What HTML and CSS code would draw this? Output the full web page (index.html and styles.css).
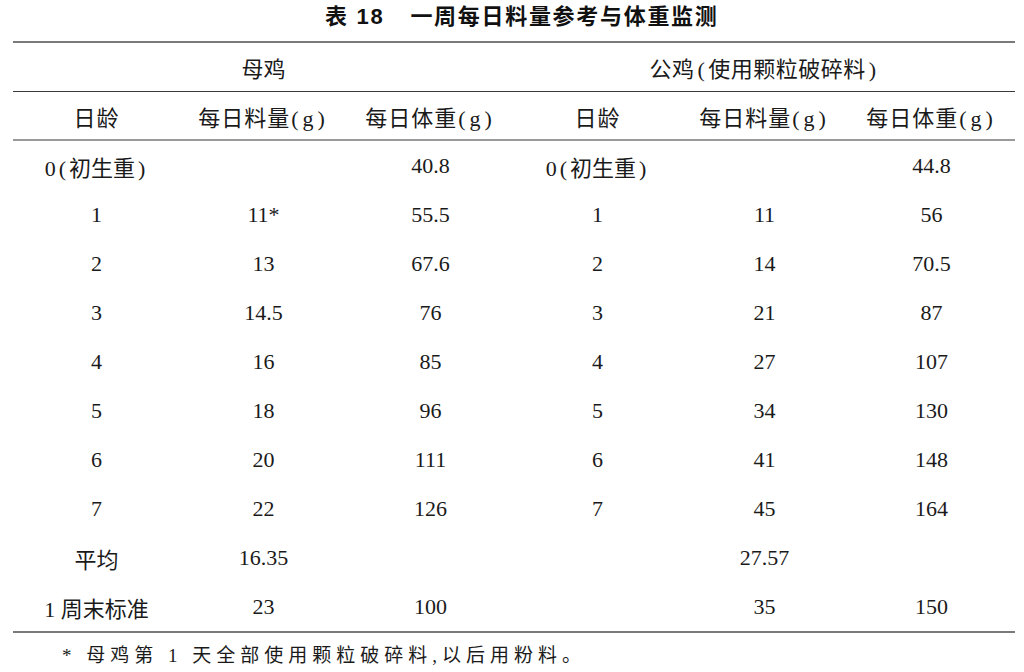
FILE: index.html
```html
<!DOCTYPE html>
<html lang="zh-CN">
<head>
<meta charset="utf-8">
<title>表 18 一周每日料量参考与体重监测</title>
<link rel="stylesheet" href="styles.css">
</head>
<body>
<div class="page">
  <h1 class="title"><span class="tno">表 18</span><span class="tname">一周每日料量参考与体重监测</span></h1>
  <table class="data">
    <colgroup>
      <col class="c"><col class="c"><col class="c"><col class="c"><col class="c"><col class="c">
    </colgroup>
    <thead>
      <tr class="group">
        <th colspan="3">母鸡</th>
        <th colspan="3" class="wide">公鸡<span class="p">(</span>使用颗粒破碎料<span class="p">)</span></th>
      </tr>
      <tr class="head">
        <th>日龄</th>
        <th>每日料量<span class="u">(g)</span></th>
        <th>每日体重<span class="u">(g)</span></th>
        <th>日龄</th>
        <th>每日料量<span class="u">(g)</span></th>
        <th>每日体重<span class="u">(g)</span></th>
      </tr>
    </thead>
    <tbody>
      <tr><td>0<span class="p">(</span>初生重<span class="p">)</span></td><td></td><td>40.8</td><td>0<span class="p">(</span>初生重<span class="p">)</span></td><td></td><td>44.8</td></tr>
      <tr><td>1</td><td>11*</td><td>55.5</td><td>1</td><td>11</td><td>56</td></tr>
      <tr><td>2</td><td>13</td><td>67.6</td><td>2</td><td>14</td><td>70.5</td></tr>
      <tr><td>3</td><td>14.5</td><td>76</td><td>3</td><td>21</td><td>87</td></tr>
      <tr><td>4</td><td>16</td><td>85</td><td>4</td><td>27</td><td>107</td></tr>
      <tr><td>5</td><td>18</td><td>96</td><td>5</td><td>34</td><td>130</td></tr>
      <tr><td>6</td><td>20</td><td>111</td><td>6</td><td>41</td><td>148</td></tr>
      <tr><td>7</td><td>22</td><td>126</td><td>7</td><td>45</td><td>164</td></tr>
      <tr><td>平均</td><td>16.35</td><td></td><td></td><td>27.57</td><td></td></tr>
      <tr class="last"><td>1 周末标准</td><td>23</td><td>100</td><td></td><td>35</td><td>150</td></tr>
    </tbody>
  </table>
  <p class="note">* 母鸡第 1 天全部使用颗粒破碎料,以后用粉料。</p>
</div>
</body>
</html>
```

FILE: styles.css
```css
html, body {
  margin: 0;
  padding: 0;
  background: #ffffff;
}

.page {
  width: 1024px;
  height: 672px;
  overflow: hidden;
  padding: 0 0 0 13px;
  box-sizing: border-box;
  color: #1a1a1a;
  font-family: "Liberation Serif", "Noto Sans CJK SC", serif;
}

.title {
  margin: 0;
  height: 41px;
  padding-left: 312px;
  display: flex;
  align-items: center;
  padding-bottom: 14px;
  box-sizing: border-box;
  font-family: "Liberation Sans", "Noto Sans CJK SC", sans-serif;
  font-weight: 700;
  font-size: 22px;
  letter-spacing: 1.7px;
  color: #111;
}

.title .tno {
  margin-right: 26px;
}

.data {
  width: 1002px;
  border-collapse: collapse;
  table-layout: fixed;
  font-size: 22px;
}

.data col.c {
  width: 167px;
}

.data th,
.data td {
  padding: 0;
  text-align: center;
  font-weight: 400;
  white-space: nowrap;
}

.group th {
  height: 48px;
  border-top: 2px solid #7a7a7a;
  border-bottom: 1px solid #3a3a3a;
}

.group th.wide {
  letter-spacing: 0.5px;
}

.head th {
  height: 47px;
  border-bottom: 2px solid #9a9a9a;
  letter-spacing: 1px;
}

.data td {
  height: 49px;
}

.data tr.last td {
  border-bottom: 2px solid #7a7a7a;
}

.p {
  display: inline-block;
  padding: 0 3px;
}

.u {
  letter-spacing: 4px;
  margin-left: 1px;
}

.note {
  margin: 7px 0 0 49px;
  font-size: 19px;
  letter-spacing: 5px;
  color: #1a1a1a;
}
```
